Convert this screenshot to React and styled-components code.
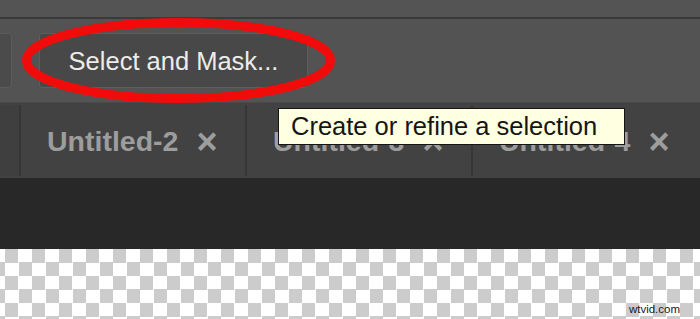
import React from 'react';
import styled, { createGlobalStyle } from 'styled-components';

const GlobalStyle = createGlobalStyle`
    html, body {
        margin: 0;
        padding: 0;
        background: #282828;
    }

    body {
        font-family: "Liberation Sans", Arial, sans-serif;
    }
`;

const tabs = ["Untitled-2", "Untitled-3", "Untitled-4"];

export default function App() {
    return (
        <Screen>
            <GlobalStyle />
            <MenuStrip />
            <Rule />

            <OptionsBar>
                <StubButton />
                <MaskButton>Select and Mask...</MaskButton>
            </OptionsBar>

            <TabBar>
                <TabLead />
                {tabs.map((name) => (
                    <Tab key={name}>
                        <span>{name}</span>
                        <Close>×</Close>
                    </Tab>
                ))}
            </TabBar>

            <Workspace />

            <Canvas>
                <Watermark>wtvid.com</Watermark>
            </Canvas>

            {/* red marker drawn round the button */}
            <Annotation width="700" height="120" viewBox="0 0 700 120">
                <ellipse cx="178.5" cy="60.5" rx="152" ry="38" fill="none" stroke="#f20b0b" strokeWidth="9" />
            </Annotation>

            <Tooltip>Create or refine a selection</Tooltip>
        </Screen>
    );
}

const Screen = styled.div`
    position: relative;
    width: 700px;
    height: 319px;
    overflow: hidden;
    display: flex;
    flex-direction: column;
`;

const MenuStrip = styled.div`
    height: 17px;
    background: #545454;
`;

const Rule = styled.div`
    height: 2px;
    background: #3a3a3a;
`;

const OptionsBar = styled.div`
    height: 84px;
    background: #535353;
    display: flex;
    align-items: center;
    gap: 27px;
    border-bottom: 1px solid #4a4a4a;
    box-sizing: border-box;
`;

const StubButton = styled.div`
    width: 20px;
    height: 55px;
    margin-left: -8px;
    box-sizing: border-box;
    background: #4b4b4b;
    border: 1px solid #5c5c5c;
    border-radius: 4px;
`;

const MaskButton = styled.div`
    width: 269px;
    height: 55px;
    box-sizing: border-box;
    display: flex;
    align-items: center;
    justify-content: center;
    background: #484848;
    border: 1px solid #5d5d5d;
    border-radius: 3px;
    color: #ececec;
    font-size: 25.5px;
    padding-top: 1px;
`;

const TabBar = styled.div`
    height: 75px;
    background: #424242;
    display: flex;
    align-items: stretch;
`;

const TabLead = styled.div`
    width: 19px;
    flex: none;
    background: #3f3f3f;
    margin: 2px 0;
`;

const Tab = styled.div`
    width: 226px;
    flex: none;
    margin: 2px 0;
    display: flex;
    align-items: center;
    gap: 18px;
    padding-left: 26px;
    padding-top: 1px;
    box-sizing: border-box;
    border-left: 2px solid #363636;
    color: #9d9d9d;
    font-size: 28.5px;
    font-weight: bold;
`;

const Close = styled.span`
    font-size: 36px;
    font-weight: bold;
    line-height: 1;
    margin-top: 2px;
`;

const Workspace = styled.div`
    height: 71px;
    background: #282828;
`;

const Canvas = styled.div`
    position: relative;
    flex: 1;
    background: repeating-conic-gradient(#ffffff 0 25%, #cccccc 0 50%) 5px 0 / 27px 27px;
`;

const Watermark = styled.div`
    position: absolute;
    right: 20px;
    bottom: 4px;
    font-size: 11.5px;
    color: #1a1a1a;
`;

const Annotation = styled.svg`
    position: absolute;
    left: 0;
    top: 0;
    pointer-events: none;
`;

const Tooltip = styled.div`
    position: absolute;
    left: 278px;
    top: 108px;
    width: 347px;
    height: 37px;
    box-sizing: border-box;
    padding-left: 12px;
    display: flex;
    align-items: center;
    background: #ffffe1;
    border: 1.5px solid #151515;
    color: #151515;
    font-size: 25.5px;
`;
